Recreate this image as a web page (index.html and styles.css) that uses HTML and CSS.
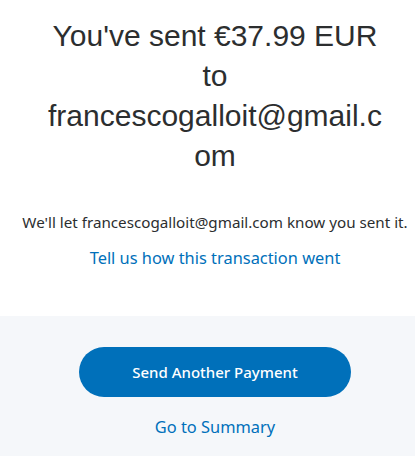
FILE: index.html
```html
<!DOCTYPE html>
<html lang="en">
<head>
    <meta charset="UTF-8">
    <meta name="viewport" content="width=device-width, initial-scale=1.0">
    <title>Payment Sent</title>
    <link rel="stylesheet" href="styles.css">
</head>
<body>
    <section class="confirmation">
        <h1 class="headline">You've sent €37.99 EUR to francescogalloit@gmail.com</h1>
        <p class="notice">We'll let francescogalloit@gmail.com know you sent it.</p>
        <a class="feedback-link" href="#">Tell us how this transaction went</a>
    </section>
    <section class="actions">
        <button type="button" class="primary-btn">Send Another Payment</button>
        <a class="summary-link" href="#">Go to Summary</a>
    </section>
</body>
</html>
```

FILE: styles.css
```css
body {
    margin: 0;
    font-family: "Noto Sans", sans-serif;
    color: #2c2e2f;
    background-color: #ffffff;
}
.confirmation {
    display: flex;
    flex-direction: column;
    align-items: center;
    padding: 16px 0 0 15px;
    height: 316px;
    box-sizing: border-box;
}
.headline {
    width: 340px;
    margin: 0 0 35px;
    font-family: "Liberation Sans", Arial, sans-serif;
    font-size: 30px;
    font-weight: normal;
    line-height: 40px;
    text-align: center;
    overflow-wrap: anywhere;
}
.notice {
    margin: 0 0 13px;
    font-size: 15.2px;
    line-height: 22px;
    text-align: center;
    white-space: nowrap;
}
.feedback-link {
    font-size: 16.4px;
    line-height: 24px;
    color: #0070ba;
    text-decoration: none;
}
.actions {
    display: flex;
    flex-direction: column;
    align-items: center;
    padding: 31px 0 0 15px;
    height: 140px;
    box-sizing: border-box;
    background-color: #f5f7fa;
}
.primary-btn {
    width: 272px;
    height: 50px;
    border: none;
    border-radius: 25px;
    background-color: #0070ba;
    color: #ffffff;
    font-family: "Noto Sans", sans-serif;
    font-size: 15px;
    font-weight: 500;
    cursor: pointer;
}
.summary-link {
    margin-top: 18px;
    font-size: 16.4px;
    line-height: 24px;
    color: #0070ba;
    text-decoration: none;
}
```
